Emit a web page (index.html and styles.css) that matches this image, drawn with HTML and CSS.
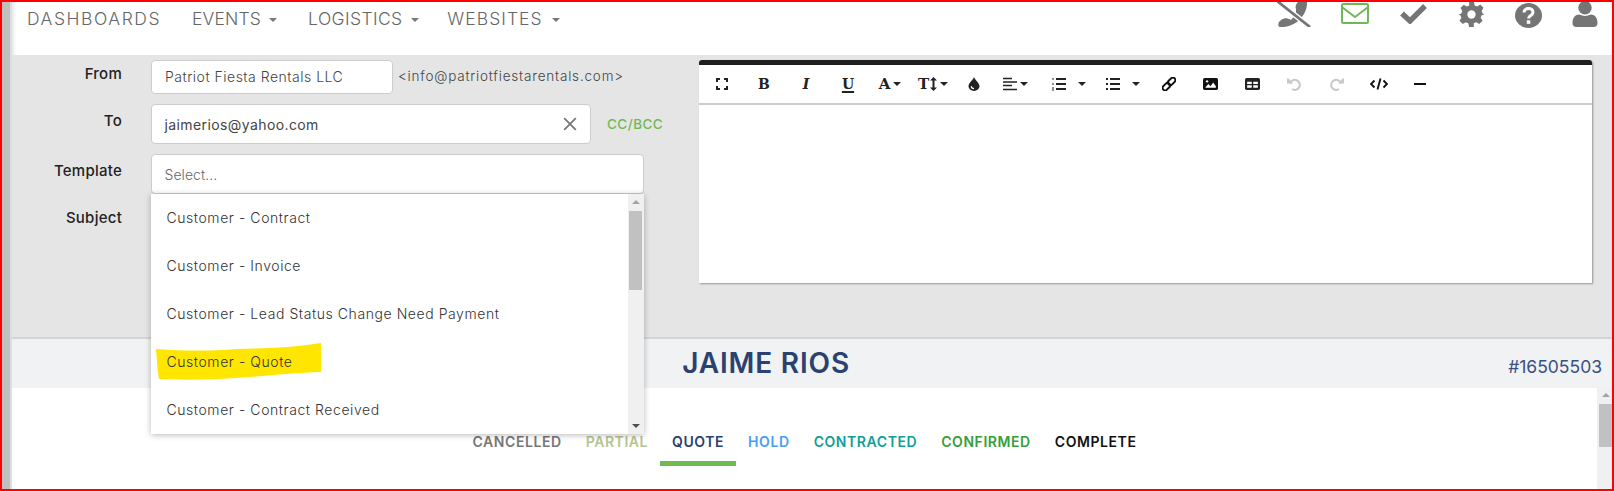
FILE: index.html
```html
<!DOCTYPE html>
<html lang="en">
<head>
<meta charset="utf-8">
<title>Send email</title>
<link rel="stylesheet" href="styles.css">
</head>
<body>
<div class="frame">
  <div class="rail"></div>
  <div class="main">
    <header class="nav">
      <nav class="menu">
        <a class="menu-item m-dash">DASHBOARDS</a>
        <a class="menu-item m-events">EVENTS <i class="caret"></i></a>
        <a class="menu-item m-log">LOGISTICS <i class="caret"></i></a>
        <a class="menu-item m-web">WEBSITES <i class="caret"></i></a>
      </nav>
      <div class="tools">
        <svg class="tool t-phone" viewBox="0 0 34 25"><path d="M21 0H30C30.500 8 26 15 20 20 14 24 8 25.500 3 25 1 25 1 22 2 20L4 18C7 16 10 16 12 17L14 18C16 16 18 13 19 10L19 7C18 5 19 2 21 0z" fill="#757575"/><path d="M0 -1L33 25" stroke="#fff" stroke-width="5.500"/><path d="M0 -1L33 25" stroke="#757575" stroke-width="2.800"/></svg>
        <svg class="tool t-mail" viewBox="0 0 28 21"><rect x="1" y="1" width="26" height="19" rx="1.500" fill="none" stroke="#6fb955" stroke-width="2"/><path d="M1.500 4.500L14 14 26.500 4.500" fill="none" stroke="#6fb955" stroke-width="2"/></svg>
        <svg class="tool t-check" viewBox="0 0 29 21"><path d="M3 10.500L11 18 26 3" fill="none" stroke="#757575" stroke-width="5.400"/></svg>
        <svg class="tool t-gear" viewBox="0 0 27 26"><path d="M11 0h5l.8 3.600 2.600 1.100 3.200-2 3.400 3.400-2 3.200 1.100 2.600L27 13l-2.900.8-1.100 2.600 2 3.200-3.400 3.400-3.200-2-2.600 1.100L16 26h-5l-.8-3.900-2.600-1.100-3.200 2-3.400-3.400 2-3.200-1.100-2.600L0 13l2.900-1 1.100-2.600-2-3.200 3.400-3.400 3.200 2 2.600-1.100z" fill="#757575"/><circle cx="13.500" cy="13" r="4.300" fill="#fff"/></svg>
        <svg class="tool t-help" viewBox="0 0 27 25"><ellipse cx="13.500" cy="12.500" rx="13.500" ry="12.500" fill="#757575"/><path d="M9 9.500c0-2.500 2-4 4.500-4s4.500 1.500 4.500 3.800c0 3.200-4.500 3.200-4.500 6.200" fill="none" stroke="#fff" stroke-width="3"/><rect x="11.800" y="17.300" width="3.500" height="3.500" fill="#fff"/></svg>
        <svg class="tool t-user" viewBox="0 0 26 26"><circle cx="13" cy="6" r="7" fill="#757575"/><path d="M0 22c0-6 3-9 7-9 2 1 4 1.500 6 1.500s4-.5 6-1.500c4 0 7 3 7 9 0 2.500-1.500 4-4 4H4c-2.500 0-4-1.500-4-4z" fill="#757575"/></svg>
      </div>
    </header>

    <section class="compose">
      <form class="fields">
        <div class="row row-from">
          <label class="label">From</label>
          <div class="input input-from">Patriot Fiesta Rentals LLC</div>
          <span class="address">&lt;info@patriotfiestarentals.com&gt;</span>
        </div>
        <div class="row row-to">
          <label class="label">To</label>
          <div class="input input-to">
            <span>jaimerios@yahoo.com</span>
            <svg class="clear" viewBox="0 0 12 12"><path d="M1 1L11 11M11 1L1 11" stroke="#777" stroke-width="1.500"/></svg>
          </div>
          <a class="ccbcc">CC/BCC</a>
        </div>
        <div class="row row-template">
          <label class="label">Template</label>
          <div class="select">
            <div class="input input-select">Select...</div>
            <div class="dropdown">
              <ul class="options">
                <li class="option">Customer - Contract</li>
                <li class="option">Customer - Invoice</li>
                <li class="option">Customer - Lead Status Change Need Payment</li>
                <li class="option option-marked">
                  <svg class="marker" viewBox="0 0 165 37" preserveAspectRatio="none"><path d="M0 6C30 8 55 8 80 6 110 5 135 5 165 0V29C135 30 110 33 80 35 50 37 25 37 3 36 1 26 1 16 0 6z" fill="#ffe600"/></svg>
                  <span class="option-text">Customer - Quote</span>
                </li>
                <li class="option">Customer - Contract Received</li>
              </ul>
              <div class="scrollbar scrollbar-list">
                <i class="arrow-up"></i>
                <div class="thumb thumb-list"></div>
                <i class="arrow-down"></i>
              </div>
            </div>
          </div>
        </div>
        <div class="row row-subject">
          <label class="label">Subject</label>
        </div>
      </form>

      <div class="editor">
        <div class="toolbar">
          <span class="btn"><svg class="i12" viewBox="0 0 12 12"><path d="M1 4V1h3M8 1h3v3M11 8v3H8M4 11H1V8" fill="none" stroke="#222" stroke-width="2"/></svg></span>
          <span class="btn glyph bold">B</span>
          <span class="btn glyph ital">I</span>
          <span class="btn glyph under">U</span>
          <span class="btn"><span class="glyph bold big">A</span><i class="caret-b"></i></span>
          <span class="btn"><span class="glyph bold big">T</span><svg class="updown" viewBox="0 0 7 14"><path d="M3.500 0L7 3.500H4.500v7H7L3.500 14 0 10.500h2.500v-7H0z" fill="#222"/></svg><i class="caret-b"></i></span>
          <span class="btn"><svg class="i14" viewBox="0 0 12 14"><path d="M6 0c1 3 5.500 6 5.500 9.200a5.500 4.800 0 0 1-11 0C.5 6 5 3 6 0z" fill="#222"/><path d="M3.300 9.300a2.700 2.500 0 0 0 2.700 2.400" fill="none" stroke="#fff" stroke-width="1.300"/></svg></span>
          <span class="btn"><svg class="i14" viewBox="0 0 14 14"><path d="M0 1.500h9M0 5h14M0 8.500h9M0 12.500h14" stroke="#222" stroke-width="1.600"/></svg><i class="caret-b"></i></span>
          <span class="btn btn-wide"><svg class="i14" viewBox="0 0 14 14"><path d="M4 2h10M4 7h10M4 12h10" stroke="#222" stroke-width="1.800"/><path d="M0 2h2M0 7h2M0 11h2M0 13h2" stroke="#222" stroke-width="1.200"/></svg><i class="caret-b"></i></span>
          <span class="btn btn-wide"><svg class="i14" viewBox="0 0 14 14"><path d="M4 2h10M4 7h10M4 12h10" stroke="#222" stroke-width="1.800"/><path d="M0 2h2M0 7h2M0 12h2" stroke="#222" stroke-width="2"/></svg><i class="caret-b"></i></span>
          <span class="btn"><svg class="i14" viewBox="0 0 14 14"><g fill="none" stroke="#111" stroke-width="2" transform="rotate(-45 7 7)"><rect x="-1" y="4.500" width="8.500" height="5" rx="2.500"/><rect x="6.500" y="4.500" width="8.500" height="5" rx="2.500"/></g></svg></span>
          <span class="btn"><svg class="i14w" viewBox="0 0 14 11"><rect width="14" height="11" rx="1.500" fill="#111"/><path d="M2 9l3-3.500 2 2 2.500-3.500L12 7.500V9z" fill="#fff"/><circle cx="3.800" cy="3" r="1.100" fill="#fff"/></svg></span>
          <span class="btn"><svg class="i14w" viewBox="0 0 14 11"><rect width="14" height="11" rx="1.500" fill="#222"/><path d="M2 3.500h4.300v2H2zM7.700 3.500H12v2H7.700zM2 6.700h4.300v2.300H2zM7.700 6.700H12v2.300H7.700z" fill="#fff"/></svg></span>
          <span class="btn"><svg class="i14" viewBox="0 0 14 14"><path d="M3 6.500a5 5 0 1 1 2 5.500" fill="none" stroke="#c8c8c8" stroke-width="2"/><path d="M0 1.500h1.500L6 6.500H0z" fill="#c8c8c8"/></svg></span>
          <span class="btn"><svg class="i14" viewBox="0 0 14 14"><path d="M11 6.500a5 5 0 1 0-2 5.500" fill="none" stroke="#c8c8c8" stroke-width="2"/><path d="M14 1.500h-1.500L8 6.500h6z" fill="#c8c8c8"/></svg></span>
          <span class="btn"><svg class="i18" viewBox="0 0 18 12"><path d="M4.500 2.500L1 6l3.500 3.500M13.500 2.500L17 6l-3.500 3.500M10.500 .5L7.500 11.500" fill="none" stroke="#111" stroke-width="1.900"/></svg></span>
          <span class="btn"><span class="hr-icon"></span></span>
        </div>
        <div class="editor-body"></div>
      </div>
    </section>

    <section class="record">
      <h1 class="record-name">JAIME RIOS</h1>
      <span class="record-id">#16505503</span>
    </section>

    <section class="content">
      <div class="tabs">
        <a class="tab s-cancelled">CANCELLED</a>
        <a class="tab s-partial">PARTIAL</a>
        <a class="tab s-quote active">QUOTE</a>
        <a class="tab s-hold">HOLD</a>
        <a class="tab s-contracted">CONTRACTED</a>
        <a class="tab s-confirmed">CONFIRMED</a>
        <a class="tab s-complete">COMPLETE</a>
      </div>
      <div class="scrollbar scrollbar-page">
        <i class="arrow-up"></i>
        <div class="thumb thumb-page"></div>
      </div>
    </section>
  </div>
</div>
</body>
</html>
```

FILE: styles.css
```css
* { box-sizing: border-box; }
html, body { margin: 0; padding: 0; }
body {
  font-family: Inter, "Liberation Sans", sans-serif;
  background: #fff;
  color: #555;
}
.frame {
  width: 1614px;
  height: 491px;
  border: 2px solid #f00;
  display: flex;
  overflow: hidden;
}
.rail {
  flex: 0 0 10px;
  background: linear-gradient(to right, #c0c0c0 80%, #dedede 80%);
}
.main {
  flex: 1;
  min-width: 0;
  display: flex;
  flex-direction: column;
}

/* top nav */
.nav {
  flex: 0 0 53px;
  display: flex;
  justify-content: space-between;
  align-items: flex-start;
  padding: 0 14px 0 15px;
  box-shadow: inset 4px 0 4px -3px #ddd;
}
.menu { display: flex; gap: 31px; padding-top: 6px; }
.menu-item {
  font-size: 17.500px;
  font-weight: 300;
  line-height: 22px;
  color: #666;
  white-space: nowrap;
}
.m-dash { letter-spacing: 1.550px; }
.m-events { letter-spacing: .15px; }
.m-log { letter-spacing: .4px; margin-right: -2.500px; }
.m-web { letter-spacing: 1.050px; }
.caret {
  display: inline-block;
  width: 0;
  height: 0;
  margin-left: 3px;
  vertical-align: 3px;
  border: 4px solid transparent;
  border-top-color: #777;
  border-bottom-width: 0;
}
.tools { display: flex; align-items: flex-start; gap: 30px; }
.tool { display: block; overflow: hidden; }
.t-phone { width: 34px; height: 25px; }
.t-mail { width: 28px; height: 21px; margin-top: 1px; }
.t-check { width: 29px; height: 21px; margin-top: 1px; }
.t-gear { width: 27px; height: 25px; }
.t-help { width: 27px; height: 25px; margin-top: 1px; }
.t-user { width: 26px; height: 25px; }

/* compose panel */
.compose {
  flex: 0 0 284px;
  display: flex;
  align-items: flex-start;
  background: #e5e5e5;
  border-bottom: 2px solid #d5d5d5;
  padding-top: 5px;
}
.fields { flex: 0 0 687px; position: relative; }
.row { display: flex; align-items: flex-start; }
.row-to { margin-top: 10.500px; }
.row-template { margin-top: 10px; }
.row-subject { margin-top: 10px; }
.label {
  flex: 0 0 110px;
  text-align: right;
  margin-right: 29px;
  font-size: 15px;
  font-weight: 500;
  color: #222;
  letter-spacing: .25px;
  line-height: 20px;
  padding-top: 4px;
}
.row-to .label { padding-top: 7px; }
.row-template .label { padding-top: 7px; }
.row-subject .label { padding-top: 4px; }
.input {
  display: flex;
  align-items: center;
  background: #fff;
  border: 1px solid #ccc;
  border-radius: 4px;
  padding: 0 12px;
  font-size: 14px;
  font-weight: 300;
  letter-spacing: .5px;
  color: #444;
}
.input-from { width: 242px; height: 33.500px; padding-left: 13px; }
.address {
  margin-left: 5px;
  font-size: 13.500px;
  font-weight: 300;
  letter-spacing: .8px;
  color: #444;
  line-height: 33px;
}
.input-to { width: 440px; height: 40px; justify-content: space-between; font-weight: 400; letter-spacing: .4px; padding-left: 12.500px; }
.clear { width: 14px; height: 14px; margin-right: 1px; }
.ccbcc {
  margin-left: 16px;
  font-size: 13.500px;
  font-weight: 500;
  letter-spacing: .45px;
  color: #6fbb53;
  line-height: 40px;
}
.select { position: relative; width: 493px; }
.input-select { height: 40px; color: #666; letter-spacing: .05px; padding-left: 12.500px; }
.dropdown {
  position: absolute;
  top: 100%;
  left: 0;
  width: 100%;
  height: 240px;
  display: flex;
  background: #fff;
  box-shadow: 0 1px 6px rgba(0,0,0,.28);
  z-index: 5;
}
.options { flex: 1; margin: 0; padding: 0; list-style: none; }
.option {
  position: relative;
  height: 48px;
  padding: 0 0 2px 15.500px;
  display: flex;
  align-items: center;
  font-size: 14px;
  font-weight: 300;
  letter-spacing: .57px;
  color: #333;
  white-space: nowrap;
}
.marker {
  position: absolute;
  left: 5px;
  top: 5px;
  width: 165px;
  height: 37px;
}
.option-text { position: relative; }

/* scrollbars */
.scrollbar {
  display: flex;
  flex-direction: column;
  background: #f0f0f0;
  position: relative;
}
.scrollbar-list { flex: 0 0 16.500px; padding: 6px 2px 6px 1.500px; }
.scrollbar-page { flex: 0 0 15px; padding: 5px 0 0 2px; }
.thumb { background: #c1c1c1; }
.thumb-list { height: 79px; margin-top: 7px; }
.thumb-page { height: 43px; margin-top: 7px; }
.arrow-up, .arrow-down {
  display: block;
  width: 0;
  height: 0;
  align-self: center;
  border: 4px solid transparent;
}
.arrow-up { border-top-width: 0; border-bottom-color: #a3a3a3; }
.arrow-down { border-bottom-width: 0; border-top-color: #505050; margin-top: auto; }

/* editor */
.editor {
  flex: 0 0 893px;
  height: 223px;
  background: #fff;
  border-top: 5px solid #1f1f1f;
  border-radius: 3px 3px 0 0;
  box-shadow: 1px 1px 2px rgba(0,0,0,.35);
  display: flex;
  flex-direction: column;
}
.toolbar {
  flex: 0 0 40px;
  display: grid;
  grid-template-columns: 2px 42px 42px 42px 42px 42px 44px 37px 47px 59px 50px 41px 42px 42px 42px 43px 41px 42px;
  align-items: center;
  border-bottom: 2px solid #ccc;
}
.toolbar::before { content: ""; }
.btn {
  display: flex;
  align-items: center;
  justify-content: center;
  gap: 3px;
  height: 20px;
}
.btn-wide { gap: 12px; }
.glyph {
  font-family: "DejaVu Serif", "Liberation Serif", serif;
  font-size: 14px;
  color: #222;
  line-height: 20px;
}
.bold { font-weight: 700; }
.big { font-size: 15px; }
.ital { font-style: italic; font-weight: 700; font-size: 14px; }
.under { font-weight: 700; text-decoration: underline; text-underline-offset: 2px; text-decoration-thickness: 2px; }
.caret-b {
  display: block;
  width: 0;
  height: 0;
  border: 4px solid transparent;
  border-top-color: #222;
  border-bottom-width: 0;
}
.i12 { width: 12px; height: 12px; }
.i14 { width: 14px; height: 14px; }
.i14w { width: 15px; height: 12px; }
.i18 { width: 18px; height: 12px; }
.updown { width: 7px; height: 14px; margin-left: -2px; }
.hr-icon { display: block; width: 12px; height: 2.500px; background: #111; }
.editor-body { flex: 1; }

/* record header */
.record {
  flex: 0 0 49px;
  position: relative;
  display: flex;
  align-items: center;
  background: #f1f2f4;
  padding: 0 10px 0 12px;
}
.record-name {
  flex: 1;
  margin: 0;
  text-align: center;
  font-size: 28px;
  font-weight: 600;
  letter-spacing: .85px;
  color: #2b4170;
  line-height: 49px;
}
.record-id {
  font-size: 17.500px;
  font-weight: 400;
  letter-spacing: 0;
  color: #3a5080;
  padding-top: 5px;
}

/* status tabs */
.content { flex: 1; display: flex; min-height: 0; }
.tabs {
  flex: 1;
  display: flex;
  justify-content: center;
  align-items: flex-start;
  padding-top: 44px;
}
.tab {
  padding: 0 12px 9px;
  line-height: 20px;
  font-size: 14px;
  font-weight: 600;
  letter-spacing: .57px;
  border-bottom: 5px solid transparent;
  white-space: nowrap;
}
.tab.active { border-bottom-color: #6fbb4f; }
.s-cancelled { color: #777; }
.s-partial { color: #b4c592; }
.s-quote { color: #2b3f6e; }
.s-hold { color: #4a9df0; }
.s-contracted { color: #0f9f96; }
.s-confirmed { color: #35a03a; }
.s-complete { color: #111; }
```
